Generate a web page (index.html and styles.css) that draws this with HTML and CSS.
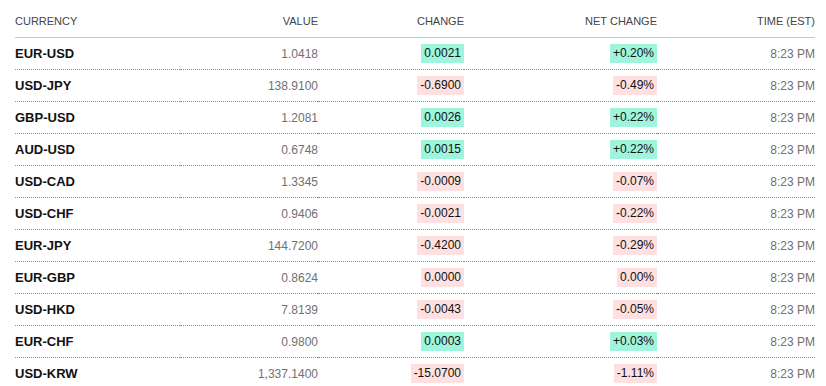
FILE: index.html
```html
<!DOCTYPE html>
<html lang="en">
<head>
  <meta charset="UTF-8" />
  <meta name="viewport" content="width=device-width, initial-scale=1.0"/>
  <title>Currencies</title>
  <link rel="stylesheet" href="styles.css">
</head>
<body>

  <table class="fx-table">
    <colgroup>
      <col class="col-cur">
      <col class="col-val">
      <col class="col-chg">
      <col class="col-net">
      <col class="col-time">
    </colgroup>
    <thead>
      <tr>
        <th class="left">Currency</th>
        <th>Value</th>
        <th>Change</th>
        <th>Net Change</th>
        <th>Time (EST)</th>
      </tr>
    </thead>
    <tbody>
      <tr>
        <td class="name">EUR-USD</td>
        <td class="value">1.0418</td>
        <td><span class="badge up">0.0021</span></td>
        <td><span class="badge up">+0.20%</span></td>
        <td class="time">8:23 PM</td>
      </tr>
      <tr>
        <td class="name">USD-JPY</td>
        <td class="value">138.9100</td>
        <td><span class="badge down">-0.6900</span></td>
        <td><span class="badge down">-0.49%</span></td>
        <td class="time">8:23 PM</td>
      </tr>
      <tr>
        <td class="name">GBP-USD</td>
        <td class="value">1.2081</td>
        <td><span class="badge up">0.0026</span></td>
        <td><span class="badge up">+0.22%</span></td>
        <td class="time">8:23 PM</td>
      </tr>
      <tr>
        <td class="name">AUD-USD</td>
        <td class="value">0.6748</td>
        <td><span class="badge up">0.0015</span></td>
        <td><span class="badge up">+0.22%</span></td>
        <td class="time">8:23 PM</td>
      </tr>
      <tr>
        <td class="name">USD-CAD</td>
        <td class="value">1.3345</td>
        <td><span class="badge down">-0.0009</span></td>
        <td><span class="badge down">-0.07%</span></td>
        <td class="time">8:23 PM</td>
      </tr>
      <tr>
        <td class="name">USD-CHF</td>
        <td class="value">0.9406</td>
        <td><span class="badge down">-0.0021</span></td>
        <td><span class="badge down">-0.22%</span></td>
        <td class="time">8:23 PM</td>
      </tr>
      <tr>
        <td class="name">EUR-JPY</td>
        <td class="value">144.7200</td>
        <td><span class="badge down">-0.4200</span></td>
        <td><span class="badge down">-0.29%</span></td>
        <td class="time">8:23 PM</td>
      </tr>
      <tr>
        <td class="name">EUR-GBP</td>
        <td class="value">0.8624</td>
        <td><span class="badge down">0.0000</span></td>
        <td><span class="badge down">0.00%</span></td>
        <td class="time">8:23 PM</td>
      </tr>
      <tr>
        <td class="name">USD-HKD</td>
        <td class="value">7.8139</td>
        <td><span class="badge down">-0.0043</span></td>
        <td><span class="badge down">-0.05%</span></td>
        <td class="time">8:23 PM</td>
      </tr>
      <tr>
        <td class="name">EUR-CHF</td>
        <td class="value">0.9800</td>
        <td><span class="badge up">0.0003</span></td>
        <td><span class="badge up">+0.03%</span></td>
        <td class="time">8:23 PM</td>
      </tr>
      <tr>
        <td class="name">USD-KRW</td>
        <td class="value">1,337.1400</td>
        <td><span class="badge down">-15.0700</span></td>
        <td><span class="badge down">-1.11%</span></td>
        <td class="time">8:23 PM</td>
      </tr>
    </tbody>
  </table>

</body>
</html>
```

FILE: styles.css
```css
:root {
  --text: #111;
  --head: #444;
  --muted: #707070;
  --up: #9ef5dc;
  --down: #fee0e0;
  --rule: #c8c8c8;
  --dots: #8a8a8a;
}

* {
  box-sizing: border-box;
}

body {
  margin: 0;
  background: #fff;
  color: var(--text);
  font-family: 'Liberation Sans', Arial, sans-serif;
}

.fx-table {
  width: 800px;
  margin: 0 15px;
  border-collapse: collapse;
  table-layout: fixed;
}

.col-cur { width: 165px; }
.col-val { width: 138px; }
.col-chg { width: 146px; }
.col-net { width: 193px; }
.col-time { width: 158px; }

.fx-table th {
  padding: 15px 0 9px;
  font-size: 11px;
  line-height: 13px;
  font-weight: normal;
  text-transform: uppercase;
  text-align: right;
  color: var(--head);
  border-bottom: 1px solid var(--rule);
}

.fx-table th.left {
  text-align: left;
}

.fx-table td {
  height: 32px;
  padding: 0;
  font-size: 12px;
  text-align: right;
  vertical-align: middle;
  border-bottom: 1px dotted var(--dots);
}

.fx-table tbody tr:last-child td {
  border-bottom: none;
}

.fx-table td.name {
  text-align: left;
  font-size: 13px;
  font-weight: bold;
}

.value, .time {
  color: var(--muted);
}

.badge {
  display: inline-block;
  padding: 2px 3px;
  line-height: 15px;
  color: var(--text);
}

.badge.up {
  background-color: var(--up);
}

.badge.down {
  background-color: var(--down);
}
```
